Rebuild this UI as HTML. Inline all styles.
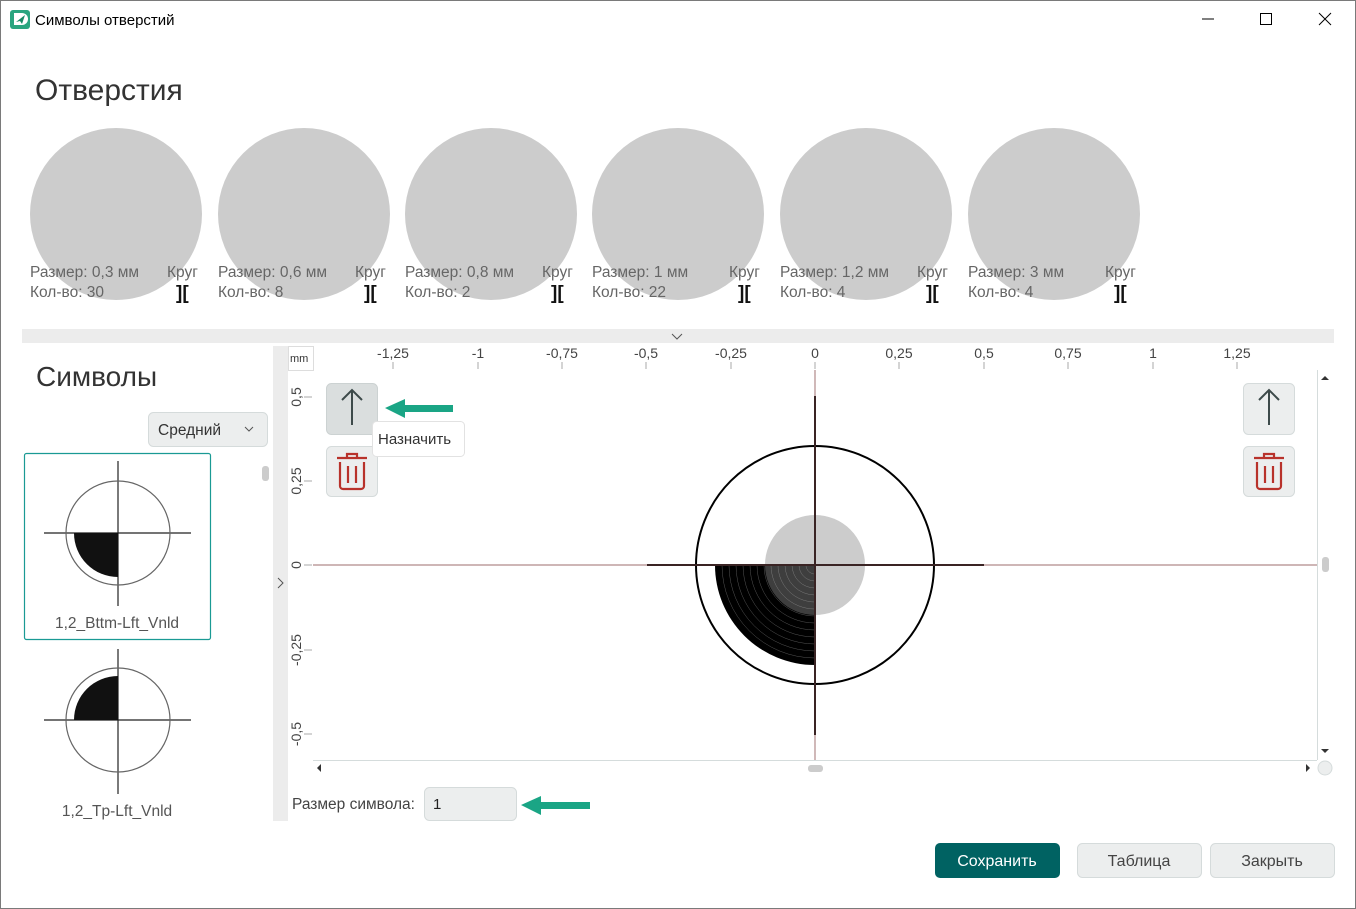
<!DOCTYPE html>
<html><head><meta charset="utf-8"><style>
html,body{margin:0;padding:0;background:#fff;width:1356px;height:909px;overflow:hidden;font-family:"Liberation Sans","Noto Sans CJK SC",sans-serif}
svg{position:absolute;left:0;top:0}
text{font-family:"Liberation Sans","Noto Sans CJK SC",sans-serif}
</style></head><body>
<svg width="1356" height="909" viewBox="0 0 1356 909">
<rect x="0.5" y="0.5" width="1355" height="908" fill="#fff" stroke="#7a7a7a"/>
<rect x="10" y="10" width="20" height="19" rx="3" fill="#2aa57f"/>
<path d="M14 13h8a6 6 0 0 1 0 12h-8z" fill="#fff"/><path d="M16 22l9-7-3 9-2-3z" fill="#1a8a66"/>
<text x="35" y="25" font-size="15" fill="#000">Символы отверстий</text>
<line x1="1202" y1="19" x2="1214" y2="19" stroke="#000"/>
<rect x="1260.5" y="13.5" width="11" height="11" fill="none" stroke="#000"/>
<path d="M1319 13l12 12M1331 13l-12 12" stroke="#000"/>
<text x="35" y="100" font-size="30" fill="#333">Отверстия</text>
<g fill="#cccccc">
<circle cx="116" cy="214" r="86"/><circle cx="304" cy="214" r="86"/><circle cx="491" cy="214" r="86"/>
<circle cx="678" cy="214" r="86"/><circle cx="866" cy="214" r="86"/><circle cx="1054" cy="214" r="86"/>
</g>
<g font-size="15.5" fill="#666">
<text x="30" y="277">Размер: 0,3 мм</text><text x="167" y="277">Круг</text><text x="30" y="297">Кол-во:  30</text>
<text x="218" y="277">Размер: 0,6 мм</text><text x="355" y="277">Круг</text><text x="218" y="297">Кол-во:  8</text>
<text x="405" y="277">Размер: 0,8 мм</text><text x="542" y="277">Круг</text><text x="405" y="297">Кол-во:  2</text>
<text x="592" y="277">Размер: 1 мм</text><text x="729" y="277">Круг</text><text x="592" y="297">Кол-во:  22</text>
<text x="780" y="277">Размер: 1,2 мм</text><text x="917" y="277">Круг</text><text x="780" y="297">Кол-во:  4</text>
<text x="968" y="277">Размер: 3 мм</text><text x="1105" y="277">Круг</text><text x="968" y="297">Кол-во:  4</text>
</g>
<g font-size="19" font-weight="bold" fill="#111" font-family="Liberation Serif,serif">
<text x="176" y="299">][</text><text x="364" y="299">][</text><text x="551" y="299">][</text>
<text x="738" y="299">][</text><text x="926" y="299">][</text><text x="1114" y="299">][</text>
</g>
<rect x="22" y="329" width="1312" height="14" fill="#ececec"/>
<path d="M672 334l5 5 5-5" fill="none" stroke="#555"/>
<text x="36" y="386" font-size="28" fill="#333">Символы</text>
<rect x="148.5" y="412.5" width="119" height="34" rx="5" fill="#eceeee" stroke="#d5dbdb"/>
<text x="158" y="435" font-size="15.5" fill="#333">Средний</text>
<path d="M245 427l4 4 4-4" fill="none" stroke="#555"/>
<rect x="24.5" y="453.5" width="186" height="186" rx="2" fill="#fff" stroke="#1a9a94" stroke-width="1.2"/>
<rect x="262" y="466" width="7" height="15" rx="3" fill="#ccc"/>
<g stroke="#222" stroke-width="1.2" fill="none">
<line x1="118" y1="461" x2="118" y2="606"/><line x1="44" y1="533" x2="191" y2="533"/>
<circle cx="118" cy="533" r="52" stroke="#666"/>
<line x1="118" y1="649" x2="118" y2="794"/><line x1="44" y1="720" x2="191" y2="720"/>
<circle cx="118" cy="720" r="52" stroke="#666"/>
</g>
<path d="M74 533h44v44a44 44 0 0 1 -44 -44z" fill="#111"/>
<path d="M74 720h44v-44a44 44 0 0 0 -44 44z" fill="#111"/>
<text x="117" y="628" font-size="15.5" fill="#555" text-anchor="middle">1,2_Bttm-Lft_Vnld</text>
<text x="117" y="816" font-size="15.5" fill="#555" text-anchor="middle">1,2_Tp-Lft_Vnld</text>
<rect x="273" y="346" width="15" height="475" fill="#ececec"/>
<path d="M278 578l5 5-5 5" fill="none" stroke="#555"/>
<rect x="288.5" y="346.5" width="25" height="24" fill="#fff" stroke="#ddd"/>
<text x="290" y="362" font-size="11" fill="#333">mm</text>
<g font-size="14" fill="#444" text-anchor="middle">
<text x="393" y="358">-1,25</text><text x="478" y="358">-1</text><text x="562" y="358">-0,75</text><text x="646" y="358">-0,5</text><text x="731" y="358">-0,25</text><text x="815" y="358">0</text><text x="899" y="358">0,25</text><text x="984" y="358">0,5</text><text x="1068" y="358">0,75</text><text x="1153" y="358">1</text><text x="1237" y="358">1,25</text>
</g>
<g stroke="#aaa">
<path d="M393 362v7M478 362v7M562 362v7M646 362v7M731 362v7M815 362v7M899 362v7M984 362v7M1068 362v7M1153 362v7M1237 362v7"/>
<path d="M304 397h8M304 481h8M304 565h8M304 650h8M304 734h8"/>
</g>
<g font-size="14" fill="#444" text-anchor="middle">
<text transform="translate(301,397) rotate(-90)">0,5</text>
<text transform="translate(301,481) rotate(-90)">0,25</text>
<text transform="translate(301,565) rotate(-90)">0</text>
<text transform="translate(301,650) rotate(-90)">-0,25</text>
<text transform="translate(301,734) rotate(-90)">-0,5</text>
</g>
<line x1="313" y1="565" x2="1317" y2="565" stroke="#b08a8a" stroke-width="1.2"/>
<line x1="815" y1="370" x2="815" y2="760" stroke="#b08a8a" stroke-width="1.2"/>
<circle cx="815" cy="565" r="119" fill="none" stroke="#000" stroke-width="2"/>
<path d="M715 565h100v100a100 100 0 0 1 -100 -100z" fill="#000"/>
<g fill="none" stroke="#555" stroke-width="0.5">
<path d="M722 565a93 93 0 0 0 93 93M729 565a86 86 0 0 0 86 86M736 565a79 79 0 0 0 79 79M743 565a72 72 0 0 0 72 72M750 565a65 65 0 0 0 65 65M757 565a58 58 0 0 0 58 58M764 565a51 51 0 0 0 51 51M771 565a44 44 0 0 0 44 44M778 565a37 37 0 0 0 37 37M785 565a30 30 0 0 0 30 30M792 565a23 23 0 0 0 23 23M799 565a16 16 0 0 0 16 16M806 565a9 9 0 0 0 9 9"/>
</g>
<circle cx="815" cy="565" r="50" fill="#ccc" fill-opacity="0.3"/>
<path d="M815 565m0 -50a50 50 0 0 1 0 100z" fill="#ccc"/>
<path d="M815 515a50 50 0 0 0 -50 50h50z" fill="#ccc"/>
<g stroke="#3a2424" stroke-width="2">
<line x1="647" y1="565" x2="984" y2="565"/><line x1="815" y1="396" x2="815" y2="735"/>
</g>
<rect x="326.5" y="383.5" width="51" height="51" rx="5" fill="#dadede" stroke="#ccd2d2"/>
<path d="M352 425v-35M342 400l10-10 10 10" fill="none" stroke="#3d4a4a" stroke-width="2"/>
<rect x="326.5" y="446.5" width="51" height="50" rx="5" fill="#eceeee" stroke="#d5dbdb"/>
<g fill="none" stroke="#b8322b" stroke-width="2.2"><path d="M337 458h30M347 458v-4h10v4M340 462v24a3 3 0 0 0 3 3h18a3 3 0 0 0 3-3v-24M348 466v17M356 466v17"/></g>
<rect x="1243.5" y="383.5" width="51" height="51" rx="5" fill="#eceeee" stroke="#d5dbdb"/>
<path d="M1269 425v-35M1259 400l10-10 10 10" fill="none" stroke="#3d4a4a" stroke-width="2"/>
<rect x="1243.5" y="446.5" width="51" height="50" rx="5" fill="#eceeee" stroke="#d5dbdb"/>
<g fill="none" stroke="#b8322b" stroke-width="2.2"><path d="M1254 458h30M1264 458v-4h10v4M1257 462v24a3 3 0 0 0 3 3h18a3 3 0 0 0 3-3v-24M1265 466v17M1273 466v17"/></g>
<rect x="372.5" y="421.5" width="92" height="35" rx="4" fill="#fff" stroke="#e2e2e2"/>
<text x="378" y="444" font-size="15" fill="#333">Назначить</text>
<path d="M385 408l20-9v6h48v7h-48v6z" fill="#1aa585"/>
<path d="M521 805l20-9v6h49v7h-49v6z" fill="#1aa585"/>
<line x1="1317.5" y1="370" x2="1317.5" y2="760" stroke="#d5dcdc"/>
<line x1="313" y1="760.5" x2="1317" y2="760.5" stroke="#d5dcdc"/>
<path d="M1321 380l4-4 4 4z" fill="#333"/><path d="M1321 749l4 4 4-4z" fill="#333"/>
<rect x="1322" y="557" width="7" height="15" rx="3" fill="#ccc"/>
<path d="M321 764l-4 4 4 4z" fill="#333"/><path d="M1306 764l4 4-4 4z" fill="#333"/>
<rect x="808" y="765" width="15" height="7" rx="3" fill="#ccc"/>
<circle cx="1325" cy="768" r="7" fill="#eceeee" stroke="#d5dbdb"/>
<text x="292" y="809" font-size="15.5" fill="#444">Размер символа:</text>
<rect x="424.5" y="787.5" width="92" height="33" rx="5" fill="#eceeee" stroke="#d5dbdb"/>
<text x="433" y="809" font-size="15" fill="#222">1</text>
<rect x="935" y="843" width="125" height="35" rx="5" fill="#006262"/>
<text x="997" y="866" font-size="16" fill="#fff" text-anchor="middle">Сохранить</text>
<rect x="1077.5" y="843.5" width="124" height="34" rx="5" fill="#eceeee" stroke="#d5dbdb"/>
<text x="1139" y="866" font-size="16" fill="#444" text-anchor="middle">Таблица</text>
<rect x="1210.5" y="843.5" width="124" height="34" rx="5" fill="#eceeee" stroke="#d5dbdb"/>
<text x="1272" y="866" font-size="16" fill="#444" text-anchor="middle">Закрыть</text>
</svg>
</body></html>
